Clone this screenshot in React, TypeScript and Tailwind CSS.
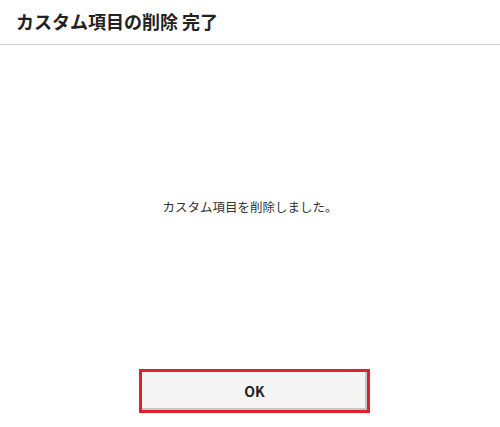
export default function App() {
  return (
    <div
      className="flex h-[427px] w-[500px] flex-col bg-white text-[#222]"
      style={{ fontFamily: '"Noto Sans CJK JP", "Noto Sans", sans-serif' }}
    >
      <header className="flex h-[45px] items-center border-b border-[#cfcfcf] px-4 pb-[3px]">
        <h1 className="text-[18px] font-bold leading-none">カスタム項目の削除 完了</h1>
      </header>

      <main className="flex flex-1 items-center justify-center">
        <p className="text-[12.5px] leading-none text-[#333]">カスタム項目を削除しました。</p>
      </main>

      <footer className="flex justify-center pb-[14px] pl-[9px]">
        <div className="h-[44px] w-[231px] border-[3px] border-[#e0202c]">
          <button className="h-full w-full bg-[#f5f5f5] text-[14px] font-bold text-[#222] shadow-[inset_-2px_-2px_0_#c6c6c6]">
            OK
          </button>
        </div>
      </footer>
    </div>
  );
}
